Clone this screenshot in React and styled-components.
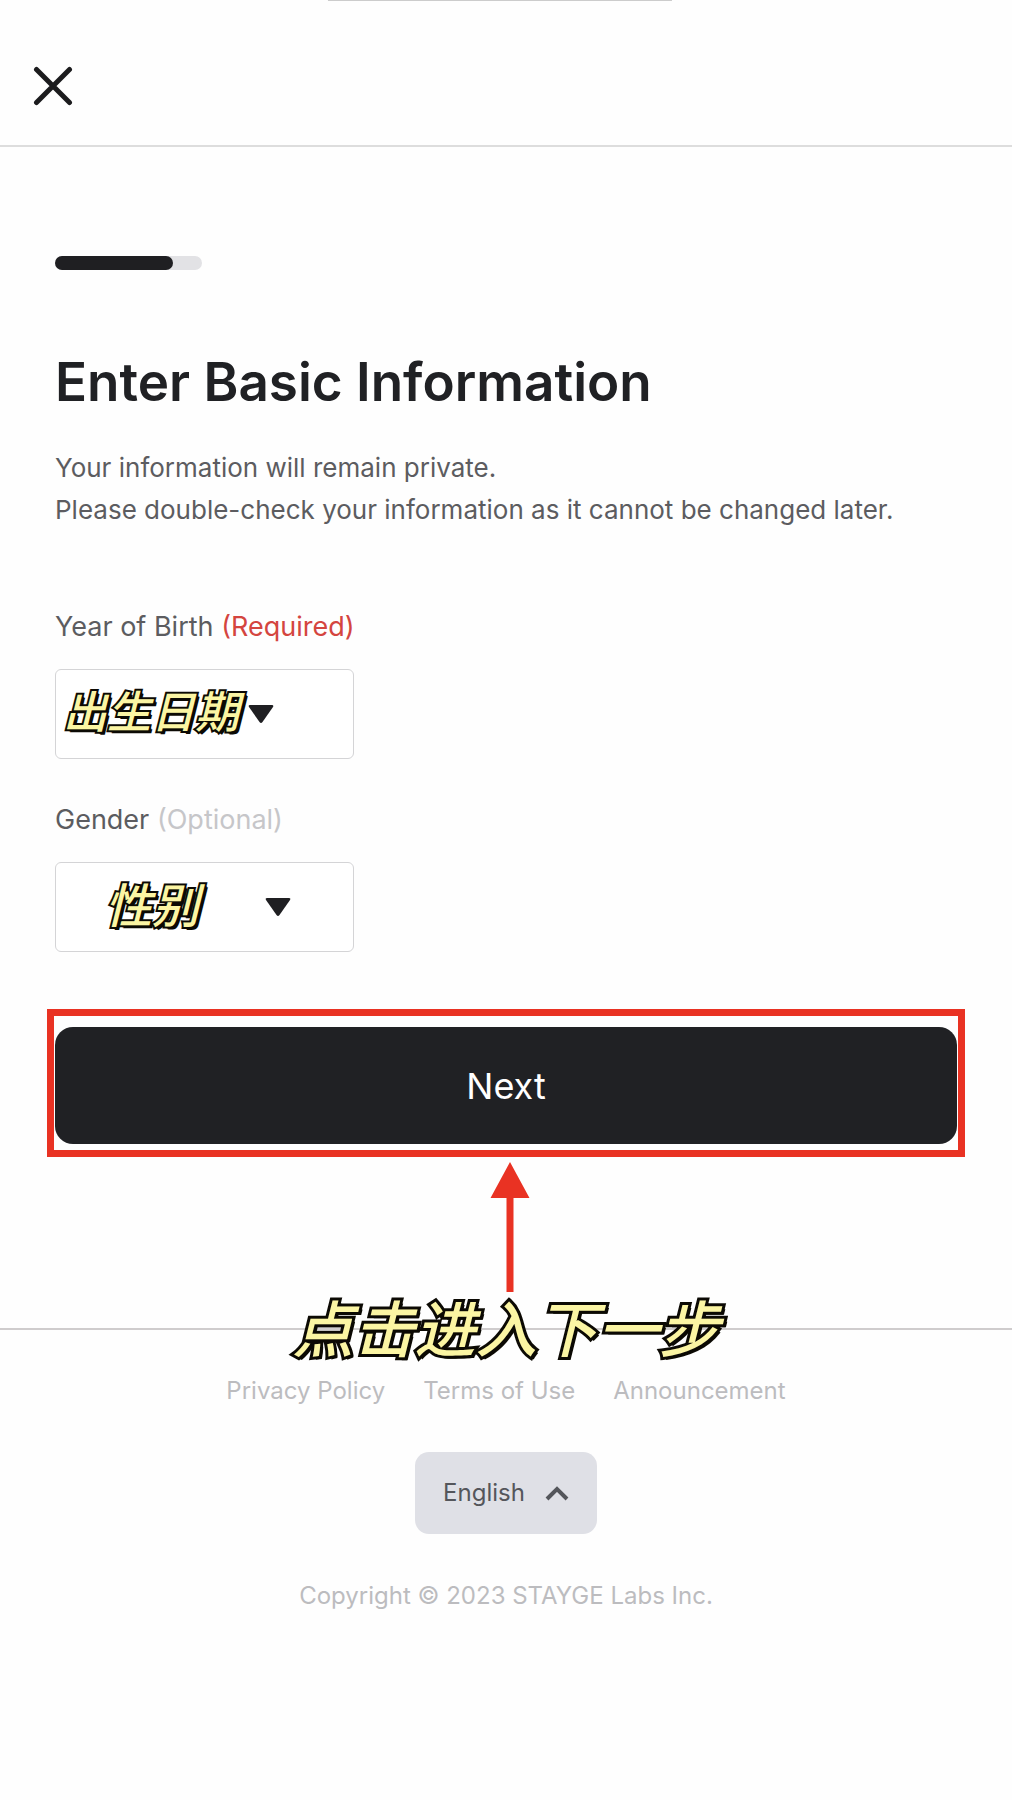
import React from "react";
import styled, { createGlobalStyle } from "styled-components";

const GlobalStyle = createGlobalStyle`
  *, *::before, *::after { box-sizing: border-box; }
  body {
    margin: 0;
    background: #fefefe;
    color: #202124;
    font-family: Inter, "Noto Sans CJK SC", sans-serif;
  }
`;

const Page = styled.div`
  min-height: 100vh;
  display: flex;
  flex-direction: column;
`;

const Header = styled.header`
  position: relative;
  height: 147px;
  display: flex;
  align-items: flex-end;
  padding: 0 28px 34px;
  border-bottom: 2px solid #dddddd;
`;

const SheetEdge = styled.div`
  position: absolute;
  top: 0;
  left: 50%;
  width: 34%;
  height: 1px;
  transform: translateX(-50%);
  margin-left: -6px;
  background: #cccccc;
`;

const CloseButton = styled.button`
  display: flex;
  align-items: center;
  justify-content: center;
  width: 50px;
  height: 50px;
  padding: 0;
  border: 0;
  background: none;
  color: #1c1c1e;
  cursor: pointer;
`;

const Main = styled.main`
  display: flex;
  flex-direction: column;
  padding: 109px 55px 184px;
`;

const Progress = styled.div`
  width: 147px;
  height: 14px;
  border-radius: 7px;
  background: #e2e2e5;
`;

const ProgressFill = styled.div`
  width: 80%;
  height: 100%;
  border-radius: 7px;
  background: #1f1f22;
`;

const Title = styled.h1`
  margin: 80px 0 0;
  font-size: 53px;
  line-height: 64px;
  font-weight: 600;
`;

const Intro = styled.p`
  margin: 33px 0 80px;
  font-size: 26px;
  line-height: 42px;
  color: #5c5c60;
`;

const Field = styled.div`
  display: flex;
  flex-direction: column;
  align-items: flex-start;
  gap: 26px;
  & + & { margin-top: 45px; }
`;

const Label = styled.label`
  font-size: 27px;
  line-height: 32px;
  color: #5c5c60;
`;

const Hint = styled.span`
  color: ${({ $required }) => ($required ? "#d4453f" : "#c6c6c9")};
`;

const SelectBox = styled.div`
  position: relative;
  width: 299px;
  height: 90px;
`;

const Select = styled.select`
  width: 100%;
  height: 100%;
  padding: 0 24px;
  appearance: none;
  border: 1px solid #d4d4d6;
  border-radius: 6px;
  background: #ffffff;
  color: #202124;
  font: inherit;
  font-size: 26px;
`;

const SelectOverlay = styled.div`
  position: absolute;
  inset: 0;
  display: flex;
  align-items: center;
  justify-content: space-between;
  padding: 0 ${({ $right }) => $right}px 0 ${({ $left }) => $left}px;
  pointer-events: none;
`;

const Note = styled.span`
  margin: 0 8px 10px 0;
  font-family: "Noto Sans CJK SC", sans-serif;
  font-size: ${({ $size }) => $size}px;
  line-height: 1;
  font-weight: 500;
  font-style: italic;
  white-space: nowrap;
  color: #fbf5a3;
  -webkit-text-stroke: ${({ $stroke }) => $stroke}px #0c0a04;
  paint-order: stroke fill;
  text-shadow: 1px 1px 0 #0c0a04, 2px 2px 0 #0c0a04, 3px 3px 0 #0c0a04;
`;

const Action = styled.div`
  position: relative;
  margin-top: 75px;
`;

const NextButton = styled.button`
  width: 100%;
  height: 117px;
  border: 0;
  border-radius: 18px;
  background: #202124;
  color: #ffffff;
  font: inherit;
  font-size: 36px;
  cursor: pointer;
`;

const Highlight = styled.div`
  position: absolute;
  inset: -18px -8px -13px;
  border: 7px solid #e93223;
  pointer-events: none;
`;

const Pointer = styled.div`
  position: absolute;
  top: 100%;
  left: 0;
  right: 0;
  display: flex;
  flex-direction: column;
  align-items: center;
  gap: 3px;
  padding: 18px 0 0 8px;
  pointer-events: none;
`;

const Footer = styled.footer`
  display: flex;
  flex-direction: column;
  align-items: center;
  padding: 45px 24px;
  border-top: 2px solid #cfcccd;
  font-size: 24px;
  line-height: 32px;
  color: #bcbcbf;
`;

const Links = styled.nav`
  display: flex;
  flex-wrap: wrap;
  justify-content: center;
  gap: 38px;
`;

const FooterLink = styled.a`
  color: inherit;
  text-decoration: none;
`;

const LanguageButton = styled.button`
  display: flex;
  align-items: center;
  gap: 20px;
  height: 82px;
  margin: 45px 0 46px;
  padding: 0 28px;
  border: 0;
  border-radius: 14px;
  background: #dfe0e6;
  color: #54565b;
  font: inherit;
  cursor: pointer;
`;

const Copyright = styled.p`
  margin: 0;
`;

const CloseIcon = () => (
  <svg width="40" height="40" viewBox="0 0 40 40" fill="none" aria-hidden="true">
    <path d="M3.5 3.5 36.500 36.500M36.500 3.500 3.500 36.500" stroke="currentColor" strokeWidth="5" strokeLinecap="round" />
  </svg>
);

const Caret = () => (
  <svg width="26" height="20" viewBox="0 0 26 20" aria-hidden="true">
    <path d="M2 1H24Q26 1 25 3L14.500 18Q13 20 11.500 18L1 3Q0 1 2 1Z" fill="#1f1f22" />
  </svg>
);

const Arrow = () => (
  <svg width="40" height="130" viewBox="0 0 40 130" fill="#e93223" aria-hidden="true">
    <path d="M20 0 39.500 36H23.500V130H16.500V36H.5Z" />
  </svg>
);

const ChevronUp = () => (
  <svg width="24" height="16" viewBox="0 0 24 16" fill="none" aria-hidden="true">
    <path d="M2 14 12 4 22 14" stroke="currentColor" strokeWidth="4" />
  </svg>
);

const fields = [
  { id: "birth", label: "Year of Birth", hint: "(Required)", required: true, note: "出生日期", size: 44, left: 8, right: 80 },
  { id: "gender", label: "Gender", hint: "(Optional)", required: false, note: "性别", size: 47, left: 50, right: 63 },
];

export default function App() {
  return (
    <Page>
      <GlobalStyle />
      <Header>
        <SheetEdge />
        <CloseButton type="button" aria-label="Close">
          <CloseIcon />
        </CloseButton>
      </Header>
      <Main>
        <Progress role="progressbar" aria-valuenow={80} aria-valuemin={0} aria-valuemax={100}>
          <ProgressFill />
        </Progress>
        <Title>Enter Basic Information</Title>
        <Intro>
          Your information will remain private.
          <br />
          Please double-check your information as it cannot be changed later.
        </Intro>
        {fields.map((f) => (
          <Field key={f.id}>
            <Label htmlFor={f.id}>
              {f.label} <Hint $required={f.required}>{f.hint}</Hint>
            </Label>
            <SelectBox>
              <Select id={f.id} required={f.required} defaultValue="">
                <option value="" />
              </Select>
              <SelectOverlay $left={f.left} $right={f.right}>
                <Note $size={f.size} $stroke={4}>{f.note}</Note>
                <Caret />
              </SelectOverlay>
            </SelectBox>
          </Field>
        ))}
        <Action>
          <NextButton type="button">Next</NextButton>
          <Highlight />
          <Pointer>
            <Arrow />
            <Note $size={61} $stroke={6}>点击进入下一步</Note>
          </Pointer>
        </Action>
      </Main>
      <Footer>
        <Links>
          <FooterLink href="#privacy">Privacy Policy</FooterLink>
          <FooterLink href="#terms">Terms of Use</FooterLink>
          <FooterLink href="#announcement">Announcement</FooterLink>
        </Links>
        <LanguageButton type="button">
          English
          <ChevronUp />
        </LanguageButton>
        <Copyright>Copyright © 2023 STAYGE Labs Inc.</Copyright>
      </Footer>
    </Page>
  );
}
